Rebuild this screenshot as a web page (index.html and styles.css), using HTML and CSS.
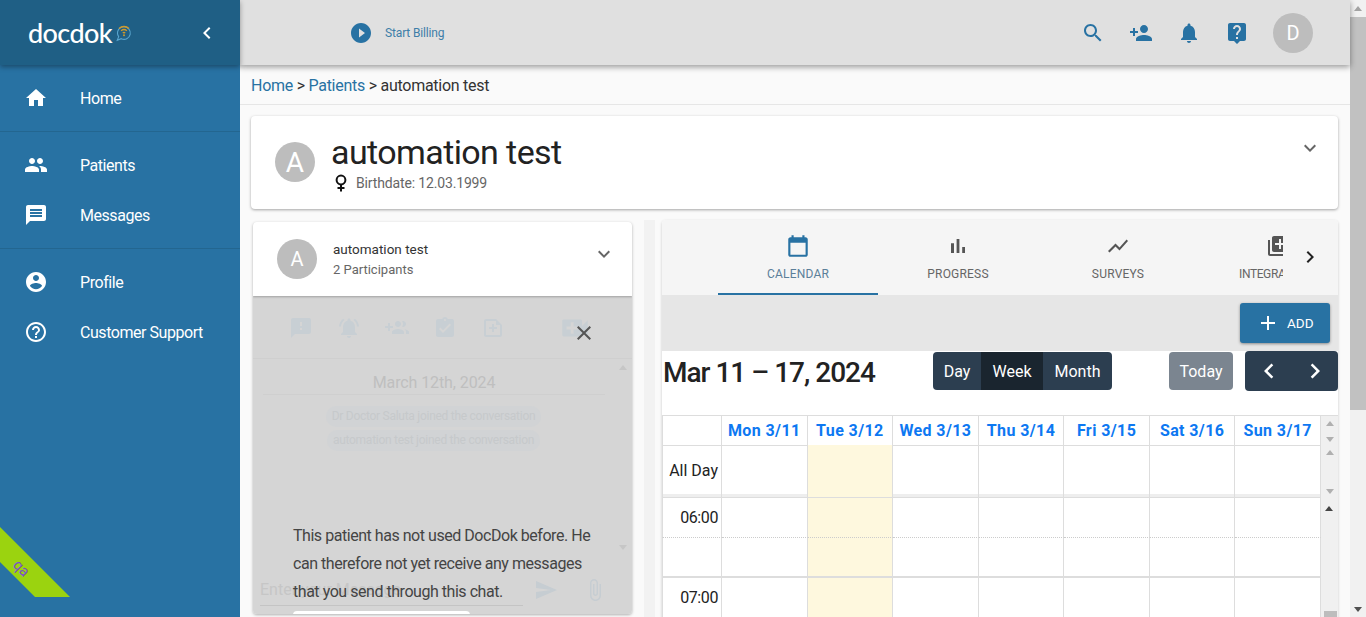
FILE: index.html
```html
<!DOCTYPE html>
<html lang="en">
<head>
<meta charset="utf-8">
<title>docdok</title>
<link rel="stylesheet" href="styles.css">
</head>
<body>
<div class="app">
  <aside class="sidebar">
    <div class="brand">
      <span class="logo">docdok</span>
      <svg class="logo-mark" viewBox="0 0 20 20"><path d="M10 3a7 7 0 1 1-3 13.3L2.5 18l1.6-4A7 7 0 0 1 10 3z" fill="none" stroke="#5aa6cf" stroke-width="1.2"/><path d="M4.5 5a8 8 0 0 1 11 0M6.8 7.5a5 5 0 0 1 6.4 0M8.6 10a2.4 2.4 0 0 1 2.8 0" fill="none" stroke="#d09a2a" stroke-width="1.5"/><circle cx="10" cy="12.4" r="1.1" fill="#d09a2a"/></svg>
      <svg class="icon brand-back" viewBox="0 0 24 24"><path d="M15.41 7.41L14 6l-6 6 6 6 1.41-1.41L10.83 12z"/></svg>
    </div>
    <nav class="nav-group">
      <a class="nav-item"><svg class="icon" viewBox="0 0 24 24"><path d="M10 20v-6h4v6h5v-8h3L12 3 2 12h3v8z"/></svg>Home</a>
    </nav>
    <nav class="nav-group">
      <a class="nav-item"><svg class="icon" viewBox="0 0 24 24"><path d="M16 11c1.66 0 2.99-1.34 2.99-3S17.66 5 16 5c-1.66 0-3 1.34-3 3s1.34 3 3 3zm-8 0c1.66 0 2.99-1.34 2.99-3S9.66 5 8 5C6.34 5 5 6.34 5 8s1.34 3 3 3zm0 2c-2.33 0-7 1.17-7 3.5V19h14v-2.5c0-2.33-4.67-3.5-7-3.5zm8 0c-.29 0-.62.02-.97.05 1.16.84 1.97 1.97 1.97 3.45V19h6v-2.5c0-2.33-4.67-3.5-7-3.5z"/></svg>Patients</a>
      <a class="nav-item"><svg class="icon" viewBox="0 0 24 24"><path d="M20 2H4c-1.1 0-1.99.9-1.99 2L2 22l4-4h14c1.1 0 2-.9 2-2V4c0-1.1-.9-2-2-2zm-2 12H6v-2h12v2zm0-3H6V9h12v2zm0-3H6V6h12v2z"/></svg>Messages</a>
    </nav>
    <nav class="nav-group">
      <a class="nav-item"><svg class="icon" viewBox="0 0 24 24"><path d="M12 2C6.48 2 2 6.48 2 12s4.48 10 10 10 10-4.48 10-10S17.52 2 12 2zm0 3c1.66 0 3 1.34 3 3s-1.34 3-3 3-3-1.34-3-3 1.34-3 3-3zm0 14.2c-2.5 0-4.71-1.28-6-3.22.03-1.99 4-3.08 6-3.08 1.99 0 5.97 1.09 6 3.08-1.29 1.94-3.5 3.22-6 3.22z"/></svg>Profile</a>
      <a class="nav-item"><svg class="icon" viewBox="0 0 24 24"><path d="M11 18h2v-2h-2v2zm1-16C6.48 2 2 6.48 2 12s4.48 10 10 10 10-4.48 10-10S17.52 2 12 2zm0 18c-4.41 0-8-3.59-8-8s3.59-8 8-8 8 3.59 8 8-3.59 8-8 8zm0-14c-2.21 0-4 1.79-4 4h2c0-1.1.9-2 2-2s2 .9 2 2c0 2-3 1.75-3 5h2c0-2.25 3-2.5 3-5 0-2.21-1.79-4-4-4z"/></svg>Customer Support</a>
    </nav>
    <div class="ribbon"><span class="ribbon-text">qa</span></div>
  </aside>

  <div class="main">
    <header class="topbar">
      <svg class="icon billing-icon" viewBox="0 0 24 24"><path d="M12 2C6.48 2 2 6.48 2 12s4.48 10 10 10 10-4.48 10-10S17.52 2 12 2zm-2 14.5v-9l6 4.5-6 4.5z"/></svg>
      <span class="billing-text">Start Billing</span>
      <div class="top-actions">
        <svg class="icon" viewBox="0 0 24 24"><path d="M15.5 14h-.79l-.28-.27C15.41 12.59 16 11.11 16 9.5 16 5.91 13.09 3 9.5 3S3 5.91 3 9.5 5.91 16 9.5 16c1.61 0 3.09-.59 4.23-1.57l.27.28v.79l5 4.99L20.49 19l-4.99-5zm-6 0C7.01 14 5 11.99 5 9.5S7.01 5 9.5 5 14 7.01 14 9.5 11.99 14 9.5 14z"/></svg>
        <svg class="icon" viewBox="0 0 24 24"><path d="M15 12c2.21 0 4-1.79 4-4s-1.79-4-4-4-4 1.79-4 4 1.79 4 4 4zm-9-2V7H4v3H1v2h3v3h2v-3h3v-2H6zm9 4c-2.67 0-8 1.34-8 4v2h16v-2c0-2.66-5.33-4-8-4z"/></svg>
        <svg class="icon" viewBox="0 0 24 24"><path d="M12 22c1.1 0 2-.9 2-2h-4c0 1.1.89 2 2 2zm6-6v-5c0-3.07-1.64-5.64-4.5-6.32V4c0-.83-.67-1.5-1.5-1.5s-1.5.67-1.5 1.5v.68C7.63 5.36 6 7.92 6 11v5l-2 2v1h16v-1l-2-2z"/></svg>
        <svg class="icon" viewBox="0 0 24 24"><path d="M19 2H5c-1.11 0-2 .9-2 2v14c0 1.1.89 2 2 2h4l3 3 3-3h4c1.1 0 2-.9 2-2V4c0-1.1-.9-2-2-2zm-6 16h-2v-2h2v2zm2.07-7.75l-.9.92C13.45 11.9 13 12.5 13 14h-2v-.5c0-1.1.45-2.1 1.17-2.83l1.24-1.26c.37-.36.59-.86.59-1.41 0-1.1-.9-2-2-2s-2 .9-2 2H8c0-2.21 1.79-4 4-4s4 1.79 4 4c0 .88-.36 1.68-.93 2.25z"/></svg>
        <span class="avatar">D</span>
      </div>
    </header>

    <div class="crumbs"><a class="crumb-link">Home</a> &gt; <a class="crumb-link">Patients</a> &gt; automation test</div>

    <section class="patient-card">
      <span class="avatar patient-avatar">A</span>
      <div class="patient-info">
        <h1 class="patient-name">automation test</h1>
        <div class="patient-meta">
          <svg class="female" viewBox="0 0 14 18"><circle cx="7" cy="6" r="4.4" fill="none" stroke="#111" stroke-width="2"/><path d="M7 10.5v7M3.5 14h7" stroke="#111" stroke-width="2" fill="none"/></svg>
          <span>Birthdate: 12.03.1999</span>
        </div>
      </div>
      <svg class="icon chevron card-chevron" viewBox="0 0 24 24"><path d="M16.59 8.59L12 13.17 7.41 8.59 6 10l6 6 6-6z"/></svg>
    </section>

    <div class="columns">
      <section class="chat">
        <div class="chat-head">
          <span class="avatar">A</span>
          <div class="chat-title">
            <div class="chat-name">automation test</div>
            <div class="chat-sub">2 Participants</div>
          </div>
          <svg class="icon chevron chat-chevron" viewBox="0 0 24 24"><path d="M16.59 8.59L12 13.17 7.41 8.59 6 10l6 6 6-6z"/></svg>
        </div>
        <div class="chat-body">
          <div class="chat-tools">
            <svg class="icon" viewBox="0 0 24 24"><path d="M20 2H4c-1.1 0-1.99.9-1.99 2L2 22l4-4h14c1.1 0 2-.9 2-2V4c0-1.1-.9-2-2-2zm-7 12h-2v-2h2v2zm0-4h-2V6h2v4z"/></svg>
            <svg class="icon" viewBox="0 0 24 24"><path d="M7.58 4.08L6.15 2.65C3.75 4.48 2.17 7.32 2.03 10.5h2c.15-2.65 1.51-4.97 3.55-6.42zm12.39 6.42h2c-.15-3.18-1.73-6.02-4.12-7.85l-1.42 1.43c2.02 1.45 3.39 3.77 3.54 6.42zM18 11c0-3.07-1.64-5.64-4.5-6.32V4c0-.83-.67-1.5-1.5-1.5s-1.5.67-1.5 1.5v.68C7.63 5.36 6 7.92 6 11v5l-2 2v1h16v-1l-2-2v-5zm-6 11c.14 0 .27-.01.4-.04.65-.14 1.18-.58 1.44-1.18.1-.24.15-.5.15-.78h-4c.01 1.1.9 2 2.01 2z"/></svg>
            <svg class="icon" viewBox="0 0 24 24"><path d="M8 10H5V7H3v3H0v2h3v3h2v-3h3v-2zm10 1c1.66 0 2.99-1.34 2.99-3S19.66 5 18 5c-.32 0-.63.05-.91.14.57.81.9 1.79.9 2.86s-.34 2.04-.9 2.86c.28.09.59.14.91.14zm-5 0c1.66 0 2.99-1.34 2.99-3S14.66 5 13 5s-3 1.34-3 3 1.34 3 3 3zm6.62 2.16c.83.73 1.38 1.66 1.38 2.84v2h3v-2c0-1.54-2.37-2.49-4.38-2.84zM13 13c-2 0-6 1-6 3v2h12v-2c0-2-4-3-6-3z"/></svg>
            <svg class="icon" viewBox="0 0 24 24"><path d="M19 3h-4.18C14.4 1.84 13.3 1 12 1c-1.3 0-2.4.84-2.82 2H5c-1.1 0-2 .9-2 2v14c0 1.1.9 2 2 2h14c1.1 0 2-.9 2-2V5c0-1.1-.9-2-2-2zm-7 0c.55 0 1 .45 1 1s-.45 1-1 1-1-.45-1-1 .45-1 1-1zm-2 14l-4-4 1.41-1.41L10 14.17l6.59-6.59L18 9l-8 8z"/></svg>
            <svg class="icon" viewBox="0 0 24 24"><path d="M15 3H5c-1.1 0-2 .9-2 2v14c0 1.1.9 2 2 2h14c1.1 0 2-.9 2-2V9h-2v10H5V5h10V3zm-2 5h-2v3H8v2h3v3h2v-3h3v-2h-3V8zm2-5v6h6z"/></svg>
            <svg class="icon tool-video" viewBox="0 0 24 24"><path d="M17 10.5V7c0-.55-.45-1-1-1H4c-.55 0-1 .45-1 1v10c0 .55.45 1 1 1h12c.55 0 1-.45 1-1v-3.5l4 4v-11l-4 4zM14 13h-3v3H9v-3H6v-2h3V8h2v3h3v2z"/></svg>
          </div>
          <div class="chat-log">
            <div class="chat-date">March 12th, 2024</div>
            <div class="chat-pills">
              <span class="pill">Dr Doctor Saluta joined the conversation</span>
              <span class="pill">automation test joined the conversation</span>
            </div>
          </div>
          <div class="chat-input">
            <span class="input-field">Enter your Message</span>
            <svg class="icon input-send" viewBox="0 0 24 24"><path d="M2.01 21L23 12 2.01 3 2 10l15 2-15 2z"/></svg>
            <svg class="icon input-attach" viewBox="0 0 24 24"><path d="M16.5 6v11.5c0 2.21-1.79 4-4 4s-4-1.79-4-4V5c0-1.38 1.12-2.5 2.5-2.5s2.5 1.12 2.5 2.5v10.5c0 .55-.45 1-1 1s-1-.45-1-1V6H10v9.5c0 1.38 1.12 2.5 2.5 2.5s2.5-1.12 2.5-2.5V5c0-2.21-1.79-4-4-4S7 2.79 7 5v12.5c0 3.04 2.46 5.5 5.5 5.5s5.5-2.46 5.5-5.5V6h-1.5z"/></svg>
          </div>
          <span class="log-arrow log-arrow-up"></span>
          <span class="log-arrow log-arrow-down"></span>
          <svg class="icon chat-close" viewBox="0 0 24 24"><path d="M19 6.41L17.59 5 12 10.59 6.41 5 5 6.41 10.59 12 5 17.59 6.41 19 12 13.41 17.59 19 19 17.59 13.41 12z"/></svg>
          <div class="chat-notice">
            <p class="notice-text">This patient has not used DocDok before. He can therefore not yet receive any messages that you send through this chat.</p>
            <span class="notice-btn"></span>
          </div>
        </div>
      </section>

      <div class="gutter"></div>

      <section class="panel">
        <div class="tabbar">
          <div class="tabs">
            <div class="tab tab-active"><svg class="icon" viewBox="0 0 24 24"><path d="M19 4h-1V2h-2v2H8V2H6v2H5c-1.1 0-2 .9-2 2v14c0 1.1.9 2 2 2h14c1.1 0 2-.9 2-2V6c0-1.1-.9-2-2-2zm0 16H5V9h14v11z"/></svg><span>CALENDAR</span></div>
            <div class="tab"><svg class="icon" viewBox="0 0 24 24"><path d="M5 9.2h3V19H5zM10.6 5h2.8v14h-2.8zm5.6 8H19v6h-2.8z"/></svg><span>PROGRESS</span></div>
            <div class="tab"><svg class="icon" viewBox="0 0 24 24"><path d="M3.5 18.49l6-6.01 4 4L22 6.92l-1.41-1.41-7.09 7.97-4-4L2 16.99z"/></svg><span>SURVEYS</span></div>
            <div class="tab tab-long"><svg class="icon" viewBox="0 0 24 24"><path d="M4 6H2v14c0 1.1.9 2 2 2h14v-2H4V6zm16-4H8c-1.1 0-2 .9-2 2v12c0 1.1.9 2 2 2h12c1.1 0 2-.9 2-2V4c0-1.1-.9-2-2-2zm-1 9h-4v4h-2v-4H9V9h4V5h2v4h4v2z"/></svg><span>INTEGRATIONS</span></div>
          </div>
          <svg class="icon tabs-next" viewBox="0 0 24 24"><path d="M10 6L8.59 7.41 13.17 12l-4.58 4.59L10 18l6-6z"/></svg>
        </div>
        <div class="addbar">
          <button class="add-btn"><svg class="icon" viewBox="0 0 24 24"><path d="M19 13h-6v6h-2v-6H5v-2h6V5h2v6h6v2z"/></svg>ADD</button>
        </div>
        <div class="cal-toolbar">
          <h2 class="cal-title">Mar 11 – 17, 2024</h2>
          <div class="btn-group">
            <span class="cal-btn cal-btn-day">Day</span><span class="cal-btn cal-btn-week">Week</span><span class="cal-btn cal-btn-month">Month</span>
          </div>
          <div class="cal-right">
            <span class="today-btn">Today</span>
            <div class="nav-btns">
              <svg class="icon" viewBox="0 0 24 24"><path d="M15.41 7.41L14 6l-6 6 6 6 1.41-1.41L10.83 12z"/></svg>
              <svg class="icon" viewBox="0 0 24 24"><path d="M10 6L8.59 7.41 13.17 12l-4.58 4.59L10 18l6-6z"/></svg>
            </div>
          </div>
        </div>
        <div class="cal">
          <div class="cal-row cal-head">
            <div class="cell"></div>
            <div class="cell day">Mon 3/11</div><div class="cell day">Tue 3/12</div><div class="cell day">Wed 3/13</div><div class="cell day">Thu 3/14</div><div class="cell day">Fri 3/15</div><div class="cell day">Sat 3/16</div><div class="cell day">Sun 3/17</div>
            <div class="cal-scroll"><i class="up"></i><i class="down"></i></div>
          </div>
          <div class="cal-row cal-allday">
            <div class="cell label">All Day</div>
            <div class="cell"></div><div class="cell today"></div><div class="cell"></div><div class="cell"></div><div class="cell"></div><div class="cell"></div><div class="cell"></div>
            <div class="cal-scroll"><i class="up"></i><i class="down"></i></div>
          </div>
          <div class="cal-divider"></div>
          <div class="cal-body">
            <div class="cal-row cal-half">
              <div class="cell time">06:00</div>
              <div class="cell"></div><div class="cell today"></div><div class="cell"></div><div class="cell"></div><div class="cell"></div><div class="cell"></div><div class="cell"></div>
              <div class="cal-scroll"></div>
            </div>
            <div class="cal-row cal-half cal-half-end">
              <div class="cell"></div>
              <div class="cell"></div><div class="cell today"></div><div class="cell"></div><div class="cell"></div><div class="cell"></div><div class="cell"></div><div class="cell"></div>
              <div class="cal-scroll"></div>
            </div>
            <div class="cal-row cal-half">
              <div class="cell time">07:00</div>
              <div class="cell"></div><div class="cell today"></div><div class="cell"></div><div class="cell"></div><div class="cell"></div><div class="cell"></div><div class="cell"></div>
              <div class="cal-scroll"></div>
            </div>
            <i class="body-arrow"></i>
            <i class="body-thumb"></i>
          </div>
        </div>
      </section>
    </div>
  </div>

  <div class="page-scroll">
    <i class="page-arrow-up"></i>
    <i class="page-thumb"></i>
    <i class="page-arrow-down"></i>
  </div>
</div>
</body>
</html>
```

FILE: styles.css
```css
* { box-sizing: border-box; }
html, body { margin: 0; height: 100%; overflow: hidden; }
body { font-family: Roboto, "Open Sans", sans-serif; color: #222; background: #fafafa; }
.icon { width: 24px; height: 24px; fill: currentColor; flex: none; display: block; }
.app { display: flex; height: 617px; overflow: hidden; }

.sidebar { width: 240px; flex: none; background: #2872a3; color: #fff; position: relative; z-index: 3; }
.brand { height: 65px; background: #1f5f85; box-shadow: 0 2px 5px rgba(0,0,0,.35); display: flex; align-items: center; padding-left: 28px; position: relative; }
.logo { font-family: Lato, sans-serif; font-size: 27px; font-weight: 500; letter-spacing: -.6px; color: #fff; }
.logo-mark { width: 18px; height: 18px; margin-left: 3px; }
.brand-back { margin-left: auto; margin-right: 21px; }
.nav-group { padding: 8px 0; border-bottom: 1px solid #236690; }
.nav-group:last-of-type { border-bottom: 0; }
.nav-item { display: flex; align-items: center; height: 50px; padding-left: 24px; gap: 32px; font-size: 16px; letter-spacing: -.45px; color: #fff; }
.ribbon { position: absolute; left: 0; top: 527px; width: 70px; height: 70px; background: #9bd30f; clip-path: polygon(0 0, 100% 100%, 50% 100%, 0 50%); }
.ribbon-text { position: absolute; left: 13px; top: 32px; font-size: 15px; line-height: 18px; color: #7a4fc9; transform: rotate(45deg); }

.main { flex: 1; min-width: 0; display: flex; flex-direction: column; }
.topbar { height: 65px; flex: none; background: #e0e0e0; box-shadow: 0 2px 6px rgba(0,0,0,.4); display: flex; align-items: center; padding: 0 37px 0 109px; position: relative; z-index: 2; color: #2872a3; }
.billing-icon { margin-right: 12px; }
.billing-text { font-size: 12px; letter-spacing: -.15px; color: #3d7ea8; }
.top-actions { margin-left: auto; display: flex; align-items: center; gap: 24px; }
.avatar { width: 40px; height: 40px; border-radius: 50%; background: #bdbdbd; color: #fff; font-size: 20px; display: flex; align-items: center; justify-content: center; flex: none; }
.crumbs { height: 40px; flex: none; border-bottom: 1px solid #e6e6e6; padding-left: 11px; font-size: 16px; letter-spacing: -.27px; line-height: 41px; color: #333; }
.crumb-link { color: #2872a3; }

.patient-card { margin: 11px 12px 0 11px; height: 93px; flex: none; background: #fff; border-radius: 4px; box-shadow: 0 1px 3px rgba(0,0,0,.35); display: flex; align-items: flex-start; padding: 26px 16px 0 24px; position: relative; }
.patient-avatar { font-size: 28px; }
.patient-info { margin-left: 16px; }
.patient-name { margin: -11px 0 0; font-size: 34px; letter-spacing: -.6px; line-height: 42px; font-weight: 400; color: #222; }
.patient-meta { display: flex; align-items: center; font-size: 14px; letter-spacing: -.15px; color: #666; margin-top: 1px; padding-left: 3px; }
.female { width: 14px; height: 18px; margin-right: 8px; }
.chevron { color: #666; }
.card-chevron { margin-left: auto; margin-top: -6px; }

.columns { flex: 1; min-height: 0; display: flex; align-items: flex-start; margin-top: 11px; padding-left: 13px; }
.chat { width: 379px; height: 392px; margin-top: 2px; flex: none; border-radius: 4px; box-shadow: 0 1px 3px rgba(0,0,0,.3); overflow: hidden; display: flex; flex-direction: column; }
.chat-head { height: 74px; flex: none; background: #fff; display: flex; align-items: center; padding: 0 16px 0 24px; box-shadow: 0 1px 2px rgba(0,0,0,.25); position: relative; z-index: 1; }
.chat-title { margin-left: 16px; font-size: 13px; }
.chat-name { color: #333; font-size: 13.5px; line-height: 20px; }
.chat-sub { color: #666; line-height: 20px; margin-top: 1px; }
.chat-chevron { margin-left: auto; margin-top: -10px; }
.chat-body { flex: 1; min-height: 0; background: #d5d5d5; position: relative; display: flex; flex-direction: column; }
.chat-tools { height: 63px; flex: none; display: flex; align-items: center; padding: 2px 0 0 36px; gap: 24px; color: #c8cfd4; border-bottom: 1px solid #cfcfcf; }
.tool-video { width: 34px; height: 34px; margin-left: 29px; }
.chat-log { flex: 1; min-height: 0; }
.chat-date { margin: 13px 27px 0 10px; padding-bottom: 1px; border-bottom: 1px solid #cfcfcf; text-align: center; font-size: 16px; letter-spacing: -.1px; line-height: 21px; color: #bfbfbf; }
.chat-pills { display: flex; flex-direction: column; align-items: center; gap: 3px; margin: 11px 18px 0 0; }
.pill { font-size: 12px; letter-spacing: -.27px; line-height: 21px; padding: 0 6px; border-radius: 10px; background: #d1d3d5; color: #c6c9cb; }
.chat-input { height: 38px; flex: none; display: flex; align-items: flex-start; padding: 0 0 0 7px; color: #c6cdd2; }
.input-field { width: 263px; height: 30px; border-bottom: 1px solid #c4c4c4; font-size: 16px; line-height: 28px; color: #c6c6c6; white-space: nowrap; overflow: hidden; }
.input-send { margin-left: 11px; margin-top: 2px; }
.input-attach { margin-left: 25px; margin-top: 2px; }
.log-arrow { position: absolute; left: 366px; width: 0; height: 0; border-left: 4px solid transparent; border-right: 4px solid transparent; }
.log-arrow-up { top: 69px; border-bottom: 5px solid #c6c6c6; }
.log-arrow-down { top: 249px; border-top: 5px solid #c6c6c6; }
.chat-close { position: absolute; left: 319px; top: 25px; color: #555; }
.chat-notice { position: absolute; left: 40px; right: 24px; top: 226px; }
.notice-text { margin: 0; font-size: 16px; letter-spacing: -.46px; line-height: 28px; color: #444; }
.notice-btn { position: absolute; left: 0; top: 89px; width: 177px; height: 10px; background: #fff; border-radius: 4px; }

.gutter { width: 11px; height: 400px; margin-left: 12px; flex: none; background: #f2f2f2; }
.panel { width: 676px; height: 400px; margin-left: 7px; flex: none; background: #fff; border-radius: 4px 4px 0 0; box-shadow: 0 1px 3px rgba(0,0,0,.2); overflow: hidden; }
.tabbar { height: 75px; background: #f5f5f5; display: flex; padding-left: 56px; position: relative; }
.tabs { display: flex; width: 565px; overflow: hidden; }
.tab { width: 160px; flex: none; height: 75px; display: flex; flex-direction: column; align-items: center; padding-top: 14px; font-size: 12px; letter-spacing: .2px; color: #666; white-space: nowrap; }
.tab-long { letter-spacing: -.4px; }
.tab .icon { color: #555; }
.tab span { margin-top: 8px; line-height: 16px; }
.tab-active { border-bottom: 2px solid #2872a3; color: #5b7f99; }
.tab-active .icon { color: #2872a3; width: 26px; height: 26px; margin-top: -1px; margin-bottom: -1px; }
.tabs-next { margin: 25px 0 0 15px; color: #222; }
.addbar { height: 56px; background: #e6e6e6; display: flex; justify-content: flex-end; padding: 8px 8px 0 0; }
.add-btn { width: 90px; height: 40px; border: 0; border-radius: 3px; background: #2872a3; color: #fff; font: 13.5px Roboto, sans-serif; display: flex; align-items: center; padding: 0 0 0 16px; gap: 7px; box-shadow: 0 1px 3px rgba(0,0,0,.4); }
.cal-toolbar { height: 64px; display: flex; align-items: flex-start; background: #fff; }
.cal-title { margin: 2px 0 0 1px; width: 270px; flex: none; font-size: 28px; letter-spacing: -1px; line-height: 40px; font-weight: 500; color: #222; white-space: nowrap; }
.btn-group { display: flex; margin-top: 1px; border-radius: 4px; overflow: hidden; }
.cal-btn { height: 38px; line-height: 40px; text-align: center; font-size: 16px; color: #fff; background: #2c3e50; }
.cal-btn-day { width: 48px; }
.cal-btn-week { width: 62px; background: #1a252f; }
.cal-btn-month { width: 69px; }
.cal-right { margin-left: auto; display: flex; gap: 12px; align-items: flex-start; }
.today-btn { width: 64px; height: 38px; margin-top: 1px; line-height: 40px; text-align: center; font-size: 16px; color: #fff; background: #7b8590; border-radius: 4px; }
.nav-btns { width: 93px; height: 40px; background: #2c3e50; border-radius: 4px; color: #fff; display: flex; align-items: center; justify-content: space-between; padding: 0 8px 0 9px; }
.nav-btns .icon { width: 30px; height: 30px; }
.cal { border-top: 1px solid #ddd; }
.cal-row { display: grid; grid-template-columns: 60px repeat(7, 1fr) 17px; }
.cell { border-right: 1px solid #ddd; border-bottom: 1px solid #ddd; }
.cell:first-child { border-left: 1px solid #ddd; }
.cal-head { height: 29px; }
.day { color: #0d78f2; font-weight: 700; font-size: 16px; letter-spacing: .4px; line-height: 29px; text-align: center; white-space: nowrap; }
.cal-allday { height: 49px; }
.label { text-align: right; font-size: 16px; line-height: 52px; padding-right: 3px; }
.today { background: #fef8de; }
.cal-scroll { background: #f0f0f0; position: relative; }
.cal-scroll .up, .cal-scroll .down, .body-arrow { position: absolute; left: 5px; width: 0; height: 0; border-left: 4px solid transparent; border-right: 4px solid transparent; }
.cal-scroll .up { top: 5px; border-bottom: 5px solid #b0b0b0; }
.cal-scroll .down { bottom: 4px; border-top: 5px solid #b0b0b0; }
.cal-divider { height: 4px; background: #eee; border-bottom: 1px solid #ddd; }
.cal-body { position: relative; }
.cal-half { height: 40px; }
.cal-half .cell { border-bottom: 1px dotted #ccc; }
.cal-half-end .cell { border-bottom: 2px solid #ddd; }
.time { text-align: right; font-size: 16px; letter-spacing: -.4px; line-height: 39px; padding-right: 3px; }
.body-arrow { top: 8px; left: 663px; border-bottom: 5px solid #444; }
.body-thumb { position: absolute; left: 662px; top: 113px; width: 13px; height: 10px; background: #bdbdbd; }

.page-scroll { width: 16px; flex: none; background: #f1f1f1; position: relative; z-index: 1; }
.page-arrow-up, .page-arrow-down { position: absolute; left: 4px; width: 0; height: 0; border-left: 4px solid transparent; border-right: 4px solid transparent; }
.page-arrow-up { top: 6px; border-bottom: 5px solid #a3a3a3; }
.page-arrow-down { bottom: 5px; border-top: 5px solid #505050; }
.page-thumb { position: absolute; left: 0; right: 0; top: 17px; height: 393px; background: #c1c1c1; }
```
